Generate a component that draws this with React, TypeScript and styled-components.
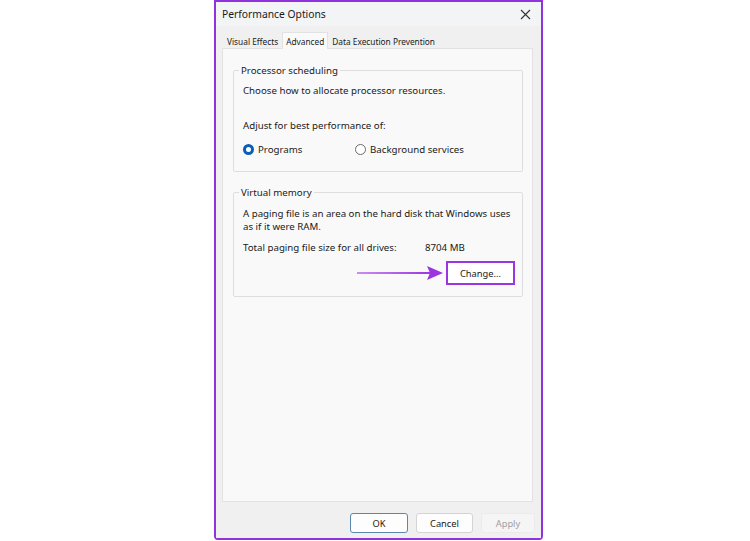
import React from "react";
import styled, { createGlobalStyle } from "styled-components";

const Global = createGlobalStyle`
  html, body { margin: 0; padding: 0; background: #ffffff; }
  body { font-family: "Noto Sans", "Open Sans", sans-serif; color: #1a1a1a; }
  * { box-sizing: border-box; }
`;

const Page = styled.div`
  width: 750px;
  height: 541px;
  display: flex;
  align-items: flex-start;
  padding-left: 214px;
  background: #ffffff;
`;

const Dialog = styled.div`
  width: 329px;
  height: 540px;
  border: 2px solid #9032dd;
  border-radius: 0 0 4px 4px;
  background: #f3f3f3;
  display: flex;
  flex-direction: column;
  font-size: 9.7px;
`;

const TitleBar = styled.div`
  height: 24px;
  display: flex;
  align-items: center;
  justify-content: space-between;
  padding: 0 9px 0 6px;
  background: #f3f4f6;
  font-size: 10.3px;
  color: #1a1a1a;
`;

const Close = styled.span`
  width: 14px;
  height: 14px;
  display: flex;
  align-items: center;
  justify-content: center;
`;

const Body = styled.div`
  flex: 1;
  display: flex;
  flex-direction: column;
  padding: 5px 8px 0 6px;
  background: #f0f0f0;
`;

const Tabs = styled.div`
  display: flex;
  align-items: flex-end;
  height: 17px;
  padding-left: 1px;
`;

const Tab = styled.div<{ $active?: boolean }>`
  height: ${(p) => (p.$active ? "17px" : "15px")};
  padding: 0 3px;
  display: flex;
  align-items: center;
  font-size: 8.3px;
  color: #1a1a1a;
  background: ${(p) => (p.$active ? "#fafafa" : "transparent")};
  border: 1px solid ${(p) => (p.$active ? "#e2e2e2" : "transparent")};
  border-bottom: none;
  margin-bottom: ${(p) => (p.$active ? "-1px" : "0")};
  position: relative;
  z-index: 1;
`;

const Panel = styled.div`
  flex: 1;
  background: #f9f9f9;
  border: 1px solid #e2e2e2;
  padding: 15px 9px 0 10px;
  display: flex;
  flex-direction: column;
  gap: 14px;
`;

const Group = styled.fieldset`
  margin: 0;
  border: 1px solid #dedede;
  border-radius: 2px;
  padding: 0 10px 0 9px;
  min-width: 0;
`;

const Legend = styled.legend`
  padding: 0 2px 0 2px;
  margin-left: -4px;
  font-size: 9.7px;
  color: #1a1a1a;
`;

const Line = styled.div<{ $mt?: number }>`
  margin-top: ${(p) => p.$mt ?? 0}px;
  line-height: 13px;
  font-size: 9.7px;
  white-space: nowrap;
`;

const RadioRow = styled.div`
  display: flex;
  align-items: center;
  margin-top: 11px;
  margin-bottom: 15px;
`;

const RadioItem = styled.label<{ $w?: number }>`
  display: flex;
  align-items: center;
  gap: 4px;
  width: ${(p) => (p.$w ? `${p.$w}px` : "auto")};
  font-size: 9.7px;
`;

const RadioDot = styled.span<{ $checked?: boolean }>`
  width: 11px;
  height: 11px;
  border-radius: 50%;
  border: ${(p) => (p.$checked ? "3px solid #0a5fb4" : "1px solid #6b6b6b")};
  background: #ffffff;
`;

const SizeRow = styled.div`
  display: flex;
  margin-top: 8px;
  line-height: 13px;
  white-space: nowrap;
`;

const SizeLabel = styled.span`
  width: 182px;
`;

const ChangeRow = styled.div`
  display: flex;
  justify-content: flex-end;
  margin-top: 7px;
  margin-bottom: 11px;
  margin-right: -3px;
  position: relative;
`;

const Highlight = styled.div`
  border: 2px solid #9b35e0;
  background: #ffffff;
`;

const Button = styled.button<{ $w: number; $primary?: boolean; $disabled?: boolean }>`
  width: ${(p) => p.$w}px;
  height: 20px;
  font-family: inherit;
  font-size: 9.3px;
  color: ${(p) => (p.$disabled ? "#a0a0a0" : "#1a1a1a")};
  background: ${(p) => (p.$disabled ? "#f5f5f5" : "#fdfdfd")};
  border: 1px solid ${(p) => (p.$primary ? "#5b87ad" : p.$disabled ? "#ebebeb" : "#d4d4d4")};
  border-radius: 3px;
  padding: 0;
  display: flex;
  align-items: center;
  justify-content: center;
`;

const InnerButton = styled(Button)`
  border: none;
  border-radius: 0;
  height: 20px;
  background: #ffffff;
`;

const Arrow = styled.svg`
  position: absolute;
  right: 72px;
  top: 4px;
`;

const Footer = styled.div`
  height: 36px;
  display: flex;
  align-items: center;
  justify-content: flex-end;
  gap: 8px;
  padding: 6px 6px 0 0;
  background: #f0f0f0;
`;

export default function App() {
  return (
    <>
      <Global />
      <Page>
        <Dialog>
          <TitleBar>
            <span>Performance Options</span>
            <Close>
              <svg width="11" height="11" viewBox="0 0 11 11">
                <path d="M1 1 L10 10 M10 1 L1 10" stroke="#333" strokeWidth="1.1" />
              </svg>
            </Close>
          </TitleBar>
          <Body>
            <Tabs>
              <Tab>Visual Effects</Tab>
              <Tab $active>Advanced</Tab>
              <Tab>Data Execution Prevention</Tab>
            </Tabs>
            <Panel>
              <Group>
                <Legend>Processor scheduling</Legend>
                <Line $mt={7}>Choose how to allocate processor resources.</Line>
                <Line $mt={22}>Adjust for best performance of:</Line>
                <RadioRow>
                  <RadioItem $w={112}>
                    <RadioDot $checked />
                    Programs
                  </RadioItem>
                  <RadioItem>
                    <RadioDot />
                    Background services
                  </RadioItem>
                </RadioRow>
              </Group>
              <Group>
                <Legend>Virtual memory</Legend>
                <Line $mt={8}>A paging file is an area on the hard disk that Windows uses</Line>
                <Line>as if it were RAM.</Line>
                <SizeRow>
                  <SizeLabel>Total paging file size for all drives:</SizeLabel>
                  <span>8704 MB</span>
                </SizeRow>
                <ChangeRow>
                  <Arrow width="86" height="16" viewBox="0 0 86 16">
                    <defs>
                      <linearGradient id="ag" x1="0" x2="1" y1="0" y2="0">
                        <stop offset="0" stopColor="#c98ef0" />
                        <stop offset="1" stopColor="#9b35e0" />
                      </linearGradient>
                    </defs>
                    <rect x="0" y="7" width="74" height="2" fill="url(#ag)" />
                    <path d="M70 1 L86 8 L70 15 L73 8 Z" fill="#9b35e0" />
                  </Arrow>
                  <Highlight>
                    <InnerButton $w={65}>Change...</InnerButton>
                  </Highlight>
                </ChangeRow>
              </Group>
            </Panel>
          </Body>
          <Footer>
            <Button $w={58} $primary>OK</Button>
            <Button $w={57}>Cancel</Button>
            <Button $w={54} $disabled>Apply</Button>
          </Footer>
        </Dialog>
      </Page>
    </>
  );
}
